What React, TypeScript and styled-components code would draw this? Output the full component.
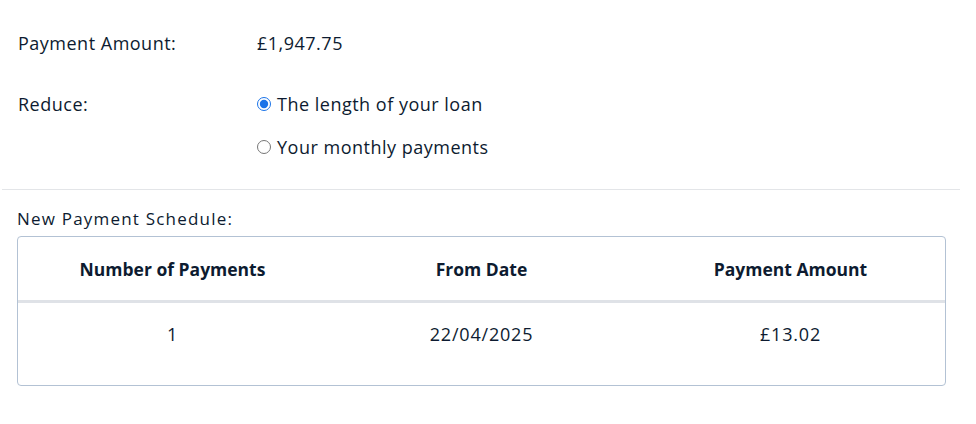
import * as React from 'react';
import styled, { createGlobalStyle } from 'styled-components';

const GlobalStyle = createGlobalStyle`
  body {
    margin: 0;
    background: #ffffff;
    font-family: "Open Sans", "Noto Sans", sans-serif;
    color: #0d1b30;
  }
`

const Page = styled.div`
  width: 958px;
  margin-left: 2px;
`

const Options = styled.section`
  padding: 31px 0 30px 16px;
  border-bottom: 1px solid #e3e5e8;
`

const Row = styled.div`
  display: grid;
  grid-template-columns: 239px 1fr;
  align-items: start;
  margin-bottom: 37px;
  &:last-child { margin-bottom: 0; }
`

const Label = styled.div`
  font-size: 18px;
  line-height: 24px;
  letter-spacing: 0.5px;
`

const Value = styled.div`
  font-size: 18px;
  line-height: 24px;
  letter-spacing: 0.5px;
`

const RadioGroup = styled.div`
  display: flex;
  flex-direction: column;
  gap: 19px;
`

const RadioOption = styled.label`
  display: flex;
  align-items: center;
  gap: 6px;
  font-size: 18px;
  line-height: 24px;
  letter-spacing: 0.5px;
  cursor: pointer;
`

const RadioInput = styled.input`
  margin: 0;
  width: 14px;
  height: 14px;
  accent-color: #1a73e8;
`

const Schedule = styled.section`
  padding: 18px 14px 0 15px;
`

const ScheduleTitle = styled.div`
  font-size: 17px;
  line-height: 22px;
  letter-spacing: 1.2px;
  margin-bottom: 6px;
`

const TableBox = styled.div`
  border: 1px solid #b3c2d4;
  border-radius: 4px;
  overflow: hidden;
`

const Table = styled.table`
  width: 100%;
  border-collapse: collapse;
  table-layout: fixed;
`

const HeadCell = styled.th`
  height: 61px;
  font-size: 17.5px;
  font-weight: 700;
  text-align: center;
  border-bottom: 3px solid #dfe2e7;
`

const Cell = styled.td`
  padding: 19px 0 39px;
  font-size: 18px;
  line-height: 24px;
  letter-spacing: 0.8px;
  text-align: center;
`

const App = () => {
  const [reduce, setReduce] = React.useState('length');
  return (
    <Page>
      <GlobalStyle />
      <Options>
        <Row>
          <Label>Payment Amount:</Label>
          <Value>£1,947.75</Value>
        </Row>
        <Row>
          <Label>Reduce:</Label>
          <RadioGroup>
            <RadioOption>
              <RadioInput
                type="radio"
                name="reduce"
                checked={reduce === 'length'}
                onChange={() => setReduce('length')}
              />
              The length of your loan
            </RadioOption>
            <RadioOption>
              <RadioInput
                type="radio"
                name="reduce"
                checked={reduce === 'monthly'}
                onChange={() => setReduce('monthly')}
              />
              Your monthly payments
            </RadioOption>
          </RadioGroup>
        </Row>
      </Options>
      <Schedule>
        <ScheduleTitle>New Payment Schedule:</ScheduleTitle>
        <TableBox>
          <Table>
            <thead>
              <tr>
                <HeadCell>Number of Payments</HeadCell>
                <HeadCell>From Date</HeadCell>
                <HeadCell>Payment Amount</HeadCell>
              </tr>
            </thead>
            <tbody>
              <tr>
                <Cell>1</Cell>
                <Cell>22/04/2025</Cell>
                <Cell>£13.02</Cell>
              </tr>
            </tbody>
          </Table>
        </TableBox>
      </Schedule>
    </Page>
  );
}

export default App
